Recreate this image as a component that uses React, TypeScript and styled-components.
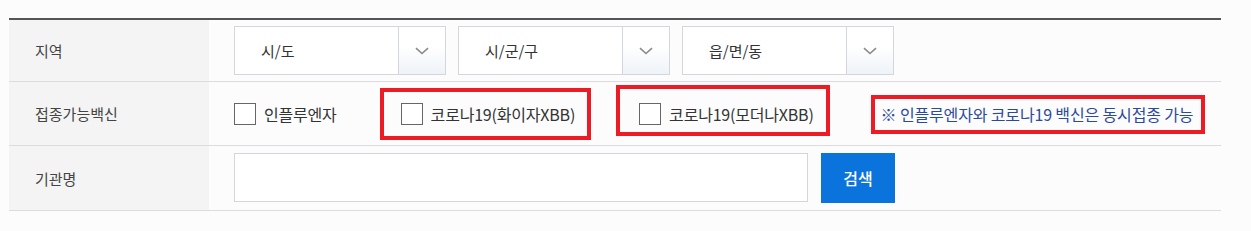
import styled, { createGlobalStyle } from 'styled-components';

const GlobalStyle = createGlobalStyle`
  html, body {
    margin: 0;
    padding: 0;
    background: #fcfcfc;
    font-family: 'Noto Sans CJK KR', 'Noto Sans', sans-serif;
  }
  * {
    box-sizing: border-box;
  }
`;

type Mark = { top: number; right: number; bottom: number; left: number };

const checkItems: { label: string; mark?: Mark }[] = [
  { label: '인플루엔자' },
  { label: '코로나19(화이자XBB)', mark: { top: -14, right: -16, bottom: -14, left: -21 } },
  { label: '코로나19(모더나XBB)', mark: { top: -17, right: -16, bottom: -10, left: -23 } },
];

const regions = ['시/도', '시/군/구', '읍/면/동'];

const App = () => {
  return (
    <>
      <GlobalStyle />
      <Page>
        <SearchTable>
          <Row height={61}>
            <LabelCell>지역</LabelCell>
            <ValueCell>
              <SelectGroup>
                {regions.map((region) => (
                  <SelectBox key={region}>
                    <SelectText>{region}</SelectText>
                    <ArrowPart>
                      <svg width='14' height='8' viewBox='0 0 14 8'>
                        <path d='M1 1.2 L7 6.5 L13 1.2' fill='none' stroke='#8a8a8a' strokeWidth='1.6' />
                      </svg>
                    </ArrowPart>
                  </SelectBox>
                ))}
              </SelectGroup>
            </ValueCell>
          </Row>

          <Row height={63}>
            <LabelCell>접종가능백신</LabelCell>
            <ValueCell>
              <CheckGroup>
                {checkItems.map((item) => (
                  <CheckItem key={item.label} $mark={item.mark}>
                    <CheckBox />
                    <CheckLabel>{item.label}</CheckLabel>
                  </CheckItem>
                ))}
                <Notice $mark={{ top: -7, right: -12, bottom: -8, left: -10 }}>
                  ※ 인플루엔자와 코로나19 백신은 동시접종 가능
                </Notice>
              </CheckGroup>
            </ValueCell>
          </Row>

          <Row height={64}>
            <LabelCell>기관명</LabelCell>
            <ValueCell>
              <SearchBar>
                <NameInput />
                <SearchBtn>검색</SearchBtn>
              </SearchBar>
            </ValueCell>
          </Row>
        </SearchTable>
      </Page>
    </>
  );
};

export default App;

const Page = styled.div`
  padding: 18px 30px 20px 9px;
  width: 1251px;
`;

const SearchTable = styled.div`
  width: 1212px;
  border-top: 2px solid #555;
`;

const Row = styled.div<{ height: number }>`
  display: flex;
  height: ${({ height }) => height + 1}px;
  border-bottom: 1px solid #dcdcdc;
`;

const LabelCell = styled.div`
  display: flex;
  align-items: center;
  width: 200px;
  padding-left: 26px;
  background: #f4f4f4;
  color: #444;
  font-size: 15px;
`;

const ValueCell = styled.div`
  display: flex;
  align-items: center;
  flex: 1;
  padding-left: 25px;
`;

const SelectGroup = styled.div`
  display: flex;
  gap: 12px;
`;

const SelectBox = styled.div`
  display: flex;
  width: 212px;
  height: 49px;
  border: 1px solid #d3d6dc;
  background: #fff;
`;

const SelectText = styled.div`
  display: flex;
  align-items: center;
  flex: 1;
  padding-left: 26px;
  color: #333;
  font-size: 15px;
`;

const ArrowPart = styled.div`
  display: flex;
  align-items: center;
  justify-content: center;
  width: 47px;
  border-left: 1px solid #d3d6dc;
  background: linear-gradient(#fff 40%, #eef3f8);
`;

const markStyle = ({ $mark }: { $mark?: Mark }) =>
  $mark
    ? `
  &::after {
    content: '';
    position: absolute;
    top: ${$mark.top}px;
    right: ${$mark.right}px;
    bottom: ${$mark.bottom}px;
    left: ${$mark.left}px;
    border: 4px solid #ed1c24;
    pointer-events: none;
  }
`
    : '';

const CheckGroup = styled.div`
  display: flex;
  align-items: center;
  gap: 64px;
`;

const CheckItem = styled.label<{ $mark?: Mark }>`
  position: relative;
  display: flex;
  align-items: center;
  gap: 8px;
  ${markStyle}
`;

const CheckBox = styled.span`
  display: block;
  width: 22px;
  height: 22px;
  border: 1px solid #666;
  background: #fff;
`;

const CheckLabel = styled.span`
  color: #333;
  font-size: 16px;
  letter-spacing: -0.2px;
`;

const Notice = styled.p<{ $mark?: Mark }>`
  position: relative;
  margin: 0 0 0 3px;
  color: #2b4a9b;
  font-size: 16px;
  letter-spacing: -0.15px;
  ${markStyle}
`;

const SearchBar = styled.div`
  display: flex;
  gap: 13px;
`;

const NameInput = styled.input`
  width: 574px;
  height: 49px;
  border: 1px solid #d3d6dc;
  background: #fff;
  outline: none;
`;

const SearchBtn = styled.button`
  width: 74px;
  height: 50px;
  border: none;
  background: #0a74dc;
  color: #fff;
  font-family: inherit;
  font-size: 16px;
  font-weight: 500;
`;
